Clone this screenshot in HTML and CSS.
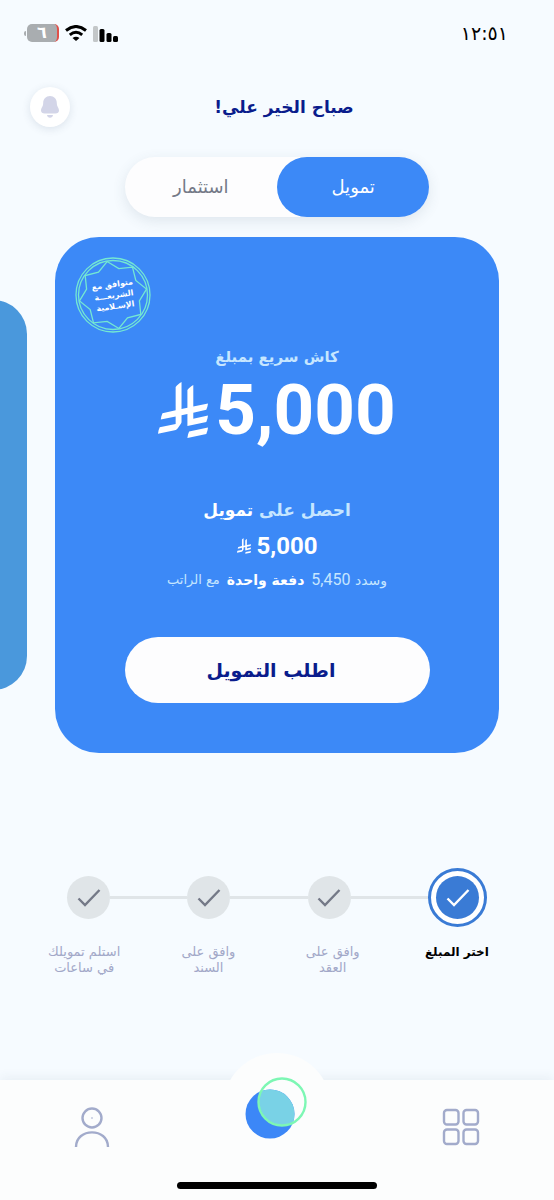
FILE: index.html
```html
<!DOCTYPE html>
<html lang="ar" dir="rtl">
<head>
<meta charset="utf-8">
<meta name="viewport" content="width=device-width, initial-scale=1">
<title>التمويل</title>
<link rel="stylesheet" href="styles.css">
</head>
<body>
<svg class="defs" aria-hidden="true">
  <symbol id="riyal" viewBox="0 0 1124 1257">
    <path d="M699.62,1113.02c-20.06,44.48-33.32,92.75-38.4,143.37l424.51-90.24c20.06-44.47,33.31-92.75,38.4-143.37l-424.51,90.24Z"/>
    <path d="M1085.73,895.8c20.06-44.47,33.32-92.75,38.4-143.37l-330.68,70.33v-135.2l292.27-62.11c20.06-44.47,33.32-92.75,38.4-143.37l-330.68,70.27V66.13c-50.67,28.45-95.67,66.32-132.25,110.99v403.35l-132.25,28.11V0c-50.67,28.44-95.67,66.32-132.25,110.99v525.69l-295.91,62.88c-20.06,44.47-33.33,92.75-38.42,143.37l334.33-71.05v170.26l-358.3,76.14c-20.06,44.47-33.32,92.75-38.4,143.37l375.04-79.7c30.53-6.35,56.77-24.4,73.83-49.24l68.78-101.97v-.02c7.14-10.55,11.3-23.27,11.3-36.97v-149.98l132.25-28.11v270.4l424.53-90.28Z"/>
  </symbol>
  <symbol id="check" viewBox="0 0 24 20">
    <path d="M1.500 10.500 8 17 22.500 2" fill="none" stroke="currentColor" stroke-width="2.400"/>
  </symbol>
</svg>

<div class="status">
  <time class="clock">١٢:٥١</time>
  <div class="indicators">
    <svg width="26" height="17" viewBox="0 0 26 17" aria-hidden="true">
      <rect x="0" y="1" width="5" height="16" rx="1.500" fill="#c3c7c9"/>
      <rect x="6.500" y="4" width="5" height="13" rx="1.500"/>
      <rect x="13.500" y="8" width="5" height="9" rx="1.500"/>
      <rect x="20" y="11" width="5" height="6" rx="1.500"/>
    </svg>
    <svg width="22" height="16" viewBox="0 0 22 16" aria-hidden="true">
      <g fill="none" stroke="#000" stroke-width="3">
        <path d="M1 5.500Q11-2.500 21 5.500"/>
        <path d="M4.800 9.800Q11 4.800 17.200 9.800"/>
      </g>
      <path d="M7.500 13Q11 10.500 14.500 13L11 16Z"/>
    </svg>
    <span class="battery">٦</span>
  </div>
</div>

<header class="header">
  <h1 class="greeting">صباح الخير علي!</h1>
  <button class="bell" type="button" aria-label="الإشعارات">
    <svg width="20" height="24" viewBox="0 0 20 24" aria-hidden="true">
      <path d="M10 1C6 1 3.200 4 3.200 8C3.200 12 1 12.500 1 15.500C1 17.500 2.500 18.500 4.500 18.500H15.500C17.500 18.500 19 17.500 19 15.500C19 12.500 16.800 12 16.800 8C16.800 4 14 1 10 1Z"/>
      <path d="M7 20H13Q12.500 22.800 10 22.800T7 20Z"/>
    </svg>
  </button>
</header>

<main>
  <div class="tabs" role="tablist">
    <button class="tab tab-active" type="button" role="tab" aria-selected="true">تمويل</button>
    <button class="tab" type="button" role="tab" aria-selected="false">استثمار</button>
  </div>

  <div class="carousel">
    <section class="card">
      <div class="stamp">
        <svg class="stamp-ring" viewBox="0 0 76 76" aria-hidden="true">
          <circle cx="38" cy="38" r="37"/>
          <circle cx="38" cy="38" r="34.500"/>
          <path d="M32.100 4.500 43.800 11.600 57.500 10.200 60.800 23.500 71.500 32.100 64.400 43.800 65.800 57.500 52.500 60.800 43.900 71.500 32.200 64.400 18.500 65.800 15.200 52.500 4.500 43.900 11.600 32.200 10.200 18.500 23.500 15.200Z"/>
        </svg>
        <span class="stamp-text">متوافق مع<br>الشريعـــة<br>الإسـلامية</span>
      </div>
      <p class="lead">كاش سريع بمبلغ</p>
      <p class="amount"><span>5,000</span><svg class="riyal-lg" aria-label="ريال"><use href="#riyal"/></svg></p>
      <p class="offer">احصل على <strong>تمويل</strong></p>
      <p class="sum"><span>5,000</span><svg class="riyal-sm" aria-label="ريال"><use href="#riyal"/></svg></p>
      <p class="terms"><span>وسدد <span class="num">5,450</span></span><strong>دفعة واحدة</strong><small>مع الراتب</small></p>
      <button class="cta" type="button">اطلب التمويل</button>
    </section>
    <div class="card-next" aria-hidden="true"></div>
  </div>

  <div class="rail" aria-hidden="true">
    <span class="dot-ring"><span class="dot dot-active"><svg class="tick"><use href="#check"/></svg></span></span>
    <span class="line"></span>
    <span class="dot"><svg class="tick"><use href="#check"/></svg></span>
    <span class="line"></span>
    <span class="dot"><svg class="tick"><use href="#check"/></svg></span>
    <span class="line"></span>
    <span class="dot"><svg class="tick"><use href="#check"/></svg></span>
  </div>
  <ol class="steps">
    <li class="step step-current" aria-current="step">اختر المبلغ</li>
    <li class="step">وافق على<br>العقد</li>
    <li class="step">وافق على<br>السند</li>
    <li class="step">استلم تمويلك<br>في ساعات</li>
  </ol>
</main>

<nav class="nav">
  <div class="nav-items">
    <button class="nav-item" type="button" aria-label="الخدمات">
      <svg width="38" height="38" viewBox="0 0 38 38" aria-hidden="true">
        <g fill="none" stroke="#a2abcb" stroke-width="2.400">
          <rect x="2" y="2" width="14.500" height="14.500" rx="3"/>
          <rect x="21.500" y="2" width="14.500" height="14.500" rx="3"/>
          <rect x="2" y="21.500" width="14.500" height="14.500" rx="3"/>
          <rect x="21.500" y="21.500" width="14.500" height="14.500" rx="3"/>
        </g>
      </svg>
    </button>
    <button class="nav-item nav-home" type="button" aria-label="الرئيسية">
      <svg width="62" height="62" viewBox="0 0 62 62" aria-hidden="true">
        <defs><clipPath id="overlap"><circle cx="25" cy="37" r="24.500"/></clipPath></defs>
        <circle cx="25" cy="37" r="24.500" fill="#3c87f7"/>
        <circle cx="37" cy="25" r="23" fill="#79d2e6" clip-path="url(#overlap)"/>
        <circle cx="37" cy="25" r="23.500" fill="none" stroke="#7df7b4" stroke-width="2.400"/>
      </svg>
    </button>
    <button class="nav-item" type="button" aria-label="حسابي">
      <svg width="36" height="42" viewBox="0 0 36 42" aria-hidden="true">
        <g fill="none" stroke="#a2abcb" stroke-width="2.400">
          <circle cx="18" cy="12" r="9.500"/>
          <path d="M2 41C2 21.500 34 21.500 34 41"/>
        </g>
        <circle cx="18" cy="12" r="1" fill="#c4cadf"/>
      </svg>
    </button>
  </div>
  <div class="home-bar"></div>
</nav>
</body>
</html>
```
FILE: styles.css
```css
* {
  box-sizing: border-box;
}

body {
  margin: 0;
  min-height: 100vh;
  display: flex;
  flex-direction: column;
  overflow-x: hidden;
  background: #f6fbff;
  color: #000;
  font-family: "DejaVu Sans", sans-serif;
}

h1,
p,
ol {
  margin: 0;
  padding: 0;
}

button {
  border: 0;
  padding: 0;
  background: none;
  color: inherit;
  font: inherit;
}

svg {
  display: block;
}

.defs {
  position: absolute;
  width: 0;
  height: 0;
}

.status {
  display: flex;
  justify-content: space-between;
  align-items: center;
  height: 66px;
  padding: 0 46px 0 27px;
}

.clock {
  font-size: 19px;
}

.indicators {
  display: flex;
  align-items: center;
  gap: 6px;
}

.battery {
  position: relative;
  width: 32px;
  height: 18px;
  border-right: 2px solid #e0504a;
  border-radius: 5px;
  background: #a9adb0;
  color: #fff;
  font-size: 16px;
  font-weight: 700;
  line-height: 17px;
  text-align: center;
}

.battery::before {
  content: "";
  position: absolute;
  left: -3px;
  top: 7px;
  width: 2px;
  height: 5px;
  border-radius: 2px 0 0 2px;
  background: #a9adb0;
}

.header {
  display: grid;
  grid-template-columns: 40px 1fr 40px;
  align-items: center;
  height: 82px;
  padding: 0 30px;
}

.greeting {
  grid-column: 2;
  padding-left: 14px;
  color: #0a1c8c;
  font-size: 17px;
  font-weight: 700;
  line-height: 30px;
  text-align: center;
}

.bell {
  display: grid;
  place-items: center;
  width: 40px;
  height: 40px;
  border-radius: 50%;
  background: #fff;
  box-shadow: 0 2px 8px rgba(60, 80, 110, 0.14);
}

.bell svg {
  fill: #d3d5e8;
}

main {
  flex: 1;
}

.tabs {
  display: flex;
  width: 55%;
  height: 60px;
  margin: 9px auto 20px;
  border-radius: 30px;
  background: #fdfdfe;
  box-shadow: 0 4px 14px rgba(60, 80, 110, 0.12);
}

.tab {
  flex: 1;
  border-radius: 30px;
  color: #747987;
  font-size: 18px;
  line-height: 30px;
}

.tab-active {
  background: #3c89f7;
  color: #fff;
}

.carousel {
  display: flex;
  align-items: center;
  gap: 28px;
  padding: 0 10%;
  overflow: hidden;
}

.card {
  position: relative;
  flex: 0 0 100%;
  display: flex;
  flex-direction: column;
  align-items: center;
  padding: 105px 20px 50px;
  border-radius: 44px;
  background: #3c89f7;
  color: #c6e6ff;
}

.card strong {
  color: #fff;
}

.card-next {
  flex: 0 0 100%;
  height: 390px;
  border-radius: 34px;
  background: #4a98dc;
}

.stamp {
  position: absolute;
  left: 20px;
  top: 20px;
  display: grid;
  place-items: center;
  width: 76px;
  height: 76px;
}

.stamp-ring {
  position: absolute;
  inset: 0;
  fill: none;
  stroke: #74e8d2;
  stroke-width: 1.3;
}

.stamp-text {
  color: #fff;
  font-size: 8px;
  font-weight: 700;
  line-height: 11px;
  text-align: center;
  transform: rotate(-8deg);
}

.lead {
  font-size: 15px;
  font-weight: 700;
  line-height: 30px;
}

.amount,
.sum {
  display: flex;
  align-items: center;
  color: #fff;
  font-family: Roboto, sans-serif;
  font-weight: 700;
}

.amount {
  gap: 7px;
  font-size: 71px;
  line-height: 76px;
}

.riyal-lg {
  width: 50px;
  height: 56px;
  fill: #fff;
}

.offer {
  margin-top: 46px;
  font-size: 17px;
  font-weight: 700;
  line-height: 32px;
}

.sum {
  gap: 6px;
  font-size: 24px;
  line-height: 40px;
}

.riyal-sm {
  width: 14px;
  height: 16px;
  fill: #fff;
}

.terms {
  display: flex;
  gap: 7px;
  font-size: 14px;
  line-height: 28px;
}

.terms small {
  font-size: 13px;
}

.num {
  font-family: Roboto, sans-serif;
  font-size: 16px;
}

.cta {
  width: 76%;
  max-width: 305px;
  height: 66px;
  margin-top: 43px;
  padding: 0 12px 0 0;
  border-radius: 33px;
  background: #fdfdfe;
  color: #0a1c8c;
  font-size: 19px;
  font-weight: 700;
}

.rail {
  display: flex;
  align-items: center;
  padding: 0 67px;
  margin-top: 115px;
}

.line {
  flex: 1;
  height: 3px;
  background: #e0e5e8;
}

.dot {
  display: grid;
  place-items: center;
  width: 43px;
  height: 43px;
  border-radius: 50%;
  background: #e0e5e8;
  color: #747987;
}

.dot-ring {
  display: grid;
  place-items: center;
  width: 59px;
  height: 59px;
  border: 3px solid #3a7bd5;
  border-radius: 50%;
  background: #fff;
}

.dot-active {
  background: #3a7bd5;
  color: #fff;
}

.tick {
  width: 24px;
  height: 20px;
}

.steps {
  display: grid;
  grid-template-columns: repeat(4, 1fr);
  padding: 0 35px 0 22px;
  margin-top: 17px;
  list-style: none;
}

.step {
  color: #a2a8c8;
  font-size: 13px;
  line-height: 16px;
  text-align: center;
}

.step-current {
  color: #000;
  font-size: 12px;
  font-weight: 700;
}

.nav {
  position: relative;
  background: #fcfdfd;
  box-shadow: 0 -3px 10px rgba(60, 80, 110, 0.07);
}

.nav::before {
  content: "";
  position: absolute;
  left: 50%;
  top: -27px;
  width: 108px;
  height: 108px;
  margin-left: -54px;
  border-radius: 50%;
  background: #fcfdfd;
}

.nav-items {
  position: relative;
  display: flex;
  justify-content: space-between;
  align-items: center;
  height: 93px;
  padding: 0 74px;
}

.nav-home {
  margin-bottom: 38px;
}

.home-bar {
  width: 36%;
  height: 7px;
  margin: 9px auto 11px;
  border-radius: 4px;
  background: #000;
}
```
